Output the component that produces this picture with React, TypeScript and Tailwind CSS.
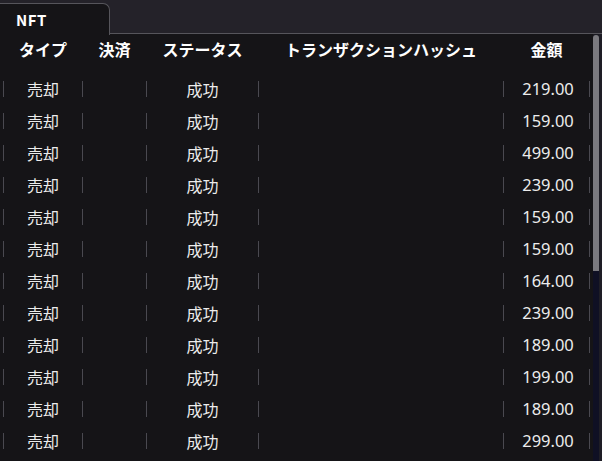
const amounts = [
  "219.00",
  "159.00",
  "499.00",
  "239.00",
  "159.00",
  "159.00",
  "164.00",
  "239.00",
  "189.00",
  "199.00",
  "189.00",
  "299.00",
];

const cols = [
  { label: "タイプ", w: "w-[78px]" },
  { label: "決済", w: "w-[63px]" },
  { label: "ステータス", w: "w-[111px]" },
  { label: "トランザクションハッシュ", w: "w-[244px]" },
  { label: "金額", w: "w-[85px]" },
];

function Sep({ hidden }: { hidden?: boolean }) {
  return (
    <div
      className={`w-px h-[16px] shrink-0 ${hidden ? "bg-transparent" : "bg-[#4a4950]"}`}
    />
  );
}

export default function App() {
  return (
    <div
      className="w-[602px] h-[461px] overflow-hidden bg-[#242229] text-white flex flex-col"
      style={{ fontFamily: '"Noto Sans CJK JP", "Noto Sans", sans-serif' }}
    >
      {/* tab strip */}
      <div className="h-[34px] shrink-0 flex items-end">
        <div className="w-[110px] h-[32px] bg-[#151417] border-t border-r border-[#56555b] rounded-tr-[7px] flex items-center pl-[16px] relative z-10 -mb-px pb-px">
          <span className="text-[15px] font-bold leading-none tracking-[0.5px]">
            NFT
          </span>
        </div>
        <div className="flex-1 border-b border-[#56555b]" />
      </div>

      <div className="flex flex-1 min-h-0">
        {/* table */}
        <div className="w-[593px] bg-[#151417] flex flex-col">
          <div className="h-[30px] flex items-center pl-[3px] shrink-0">
            {cols.map((c) => (
              <div key={c.label} className="flex items-center">
                <Sep hidden />
                <div
                  className={`${c.w} text-center text-[16px] font-bold leading-none`}
                >
                  {c.label}
                </div>
              </div>
            ))}
          </div>

          <div className="pt-[9px] flex flex-col">
            {amounts.map((amt, i) => (
              <div
                key={i}
                className="h-[32px] flex items-center pl-[3px] text-[16px] text-[#ececec] leading-none shrink-0"
              >
                <Sep />
                <div className="w-[78px] text-center">売却</div>
                <Sep />
                <div className="w-[63px]" />
                <Sep />
                <div className="w-[111px] text-center">成功</div>
                <Sep />
                <div className="w-[244px]" />
                <Sep />
                <div
                  className="w-[85px] text-center pl-[3px] text-[16.5px]"
                  style={{ fontFamily: '"Noto Sans", sans-serif' }}
                >
                  {amt}
                </div>
                <Sep />
              </div>
            ))}
          </div>
        </div>

        {/* scrollbar */}
        <div className="w-[9px] flex bg-[#1b1a22]">
          <div className="w-[6px] flex flex-col">
            <div className="h-[236px] mt-[1px] bg-[#7b7a7f] rounded-t-[3px]" />
            <div className="flex-1 bg-[#0f1024]" />
          </div>
          <div className="w-[3px] bg-[#1e1d25]" />
        </div>
      </div>
    </div>
  );
}
